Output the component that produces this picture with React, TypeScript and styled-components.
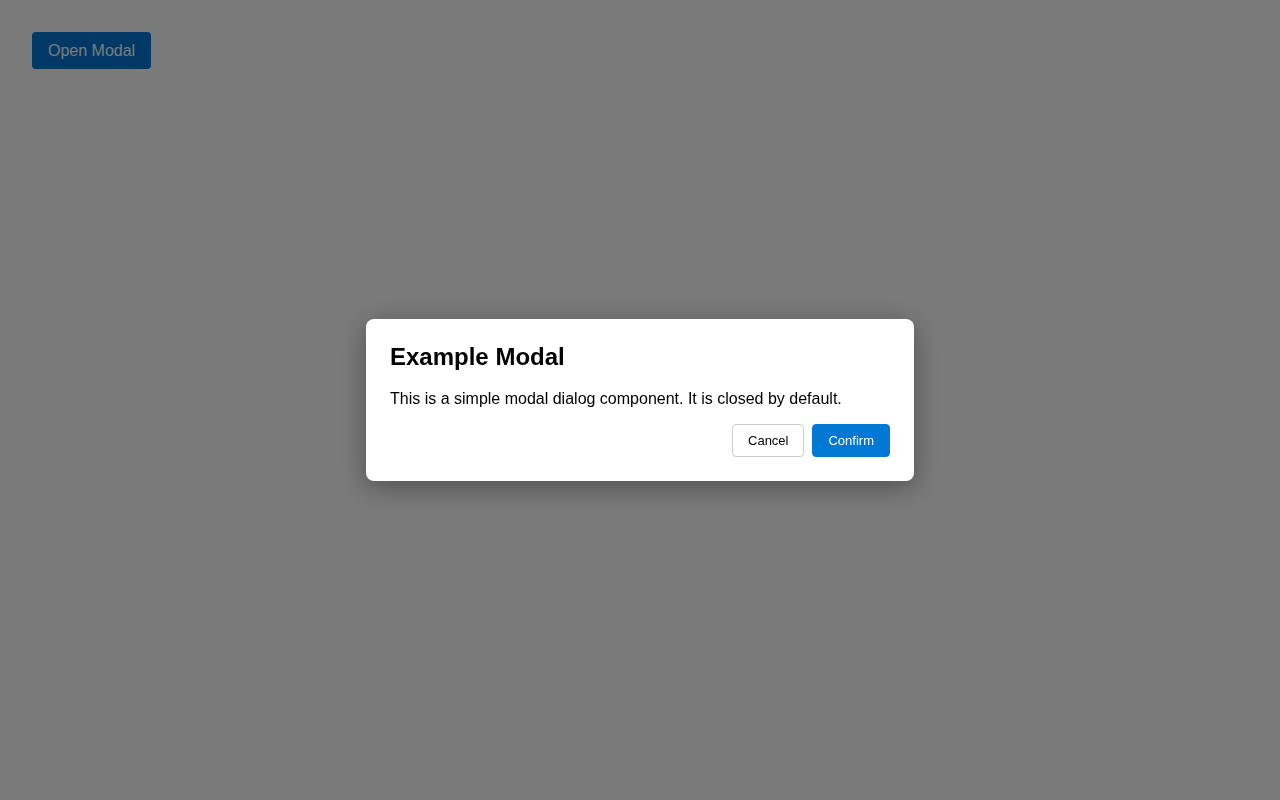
import React from "react";
import styled, { createGlobalStyle } from "styled-components";

const GlobalStyle = createGlobalStyle`
  html, body {
    margin: 0;
    padding: 0;
    background: #ffffff;
    font-family: "Liberation Sans", Arial, sans-serif;
  }
`;

const Page = styled.div`
  padding: 32px;
  min-height: 800px;
  box-sizing: border-box;
`;

const TriggerButton = styled.button`
  font-family: "Liberation Sans", Arial, sans-serif;
  font-size: 16px;
  color: #ffffff;
  background: #0078d4;
  border: none;
  border-radius: 4px;
  padding: 9px 16px;
  height: 37px;
  cursor: pointer;
`;

const Overlay = styled.div`
  position: fixed;
  inset: 0;
  z-index: 10;
  background: rgba(0, 0, 0, 0.52);
  display: flex;
  align-items: center;
  justify-content: center;
`;

const Dialog = styled.div`
  width: 548px;
  box-sizing: border-box;
  background: #ffffff;
  border-radius: 8px;
  padding: 24px;
  box-shadow: 0 6px 28px rgba(0, 0, 0, 0.35);
  color: #000000;
`;

const Title = styled.h2`
  margin: 0 0 17px;
  font-size: 24px;
  font-weight: 700;
  line-height: 27px;
`;

const Body = styled.p`
  margin: 0 0 13px;
  font-size: 16px;
  line-height: 24px;
`;

const Actions = styled.div`
  display: flex;
  justify-content: flex-end;
  gap: 8px;
`;

const ActionButton = styled.button<{ $primary?: boolean }>`
  font-family: "Liberation Sans", Arial, sans-serif;
  font-size: 13px;
  line-height: 15px;
  padding: 8px 15px;
  border-radius: 4px;
  cursor: pointer;
  border: 1px solid ${(p) => (p.$primary ? "#0078d4" : "#cccccc")};
  background: ${(p) => (p.$primary ? "#0078d4" : "#ffffff")};
  color: ${(p) => (p.$primary ? "#ffffff" : "#000000")};
`;

export default function App() {
  return (
    <>
      <GlobalStyle />
      <Page>
        <TriggerButton>Open Modal</TriggerButton>
      </Page>
      <Overlay>
        <Dialog role="dialog" aria-modal="true">
          <Title>Example Modal</Title>
          <Body>This is a simple modal dialog component. It is closed by default.</Body>
          <Actions>
            <ActionButton>Cancel</ActionButton>
            <ActionButton $primary>Confirm</ActionButton>
          </Actions>
        </Dialog>
      </Overlay>
    </>
  );
}
